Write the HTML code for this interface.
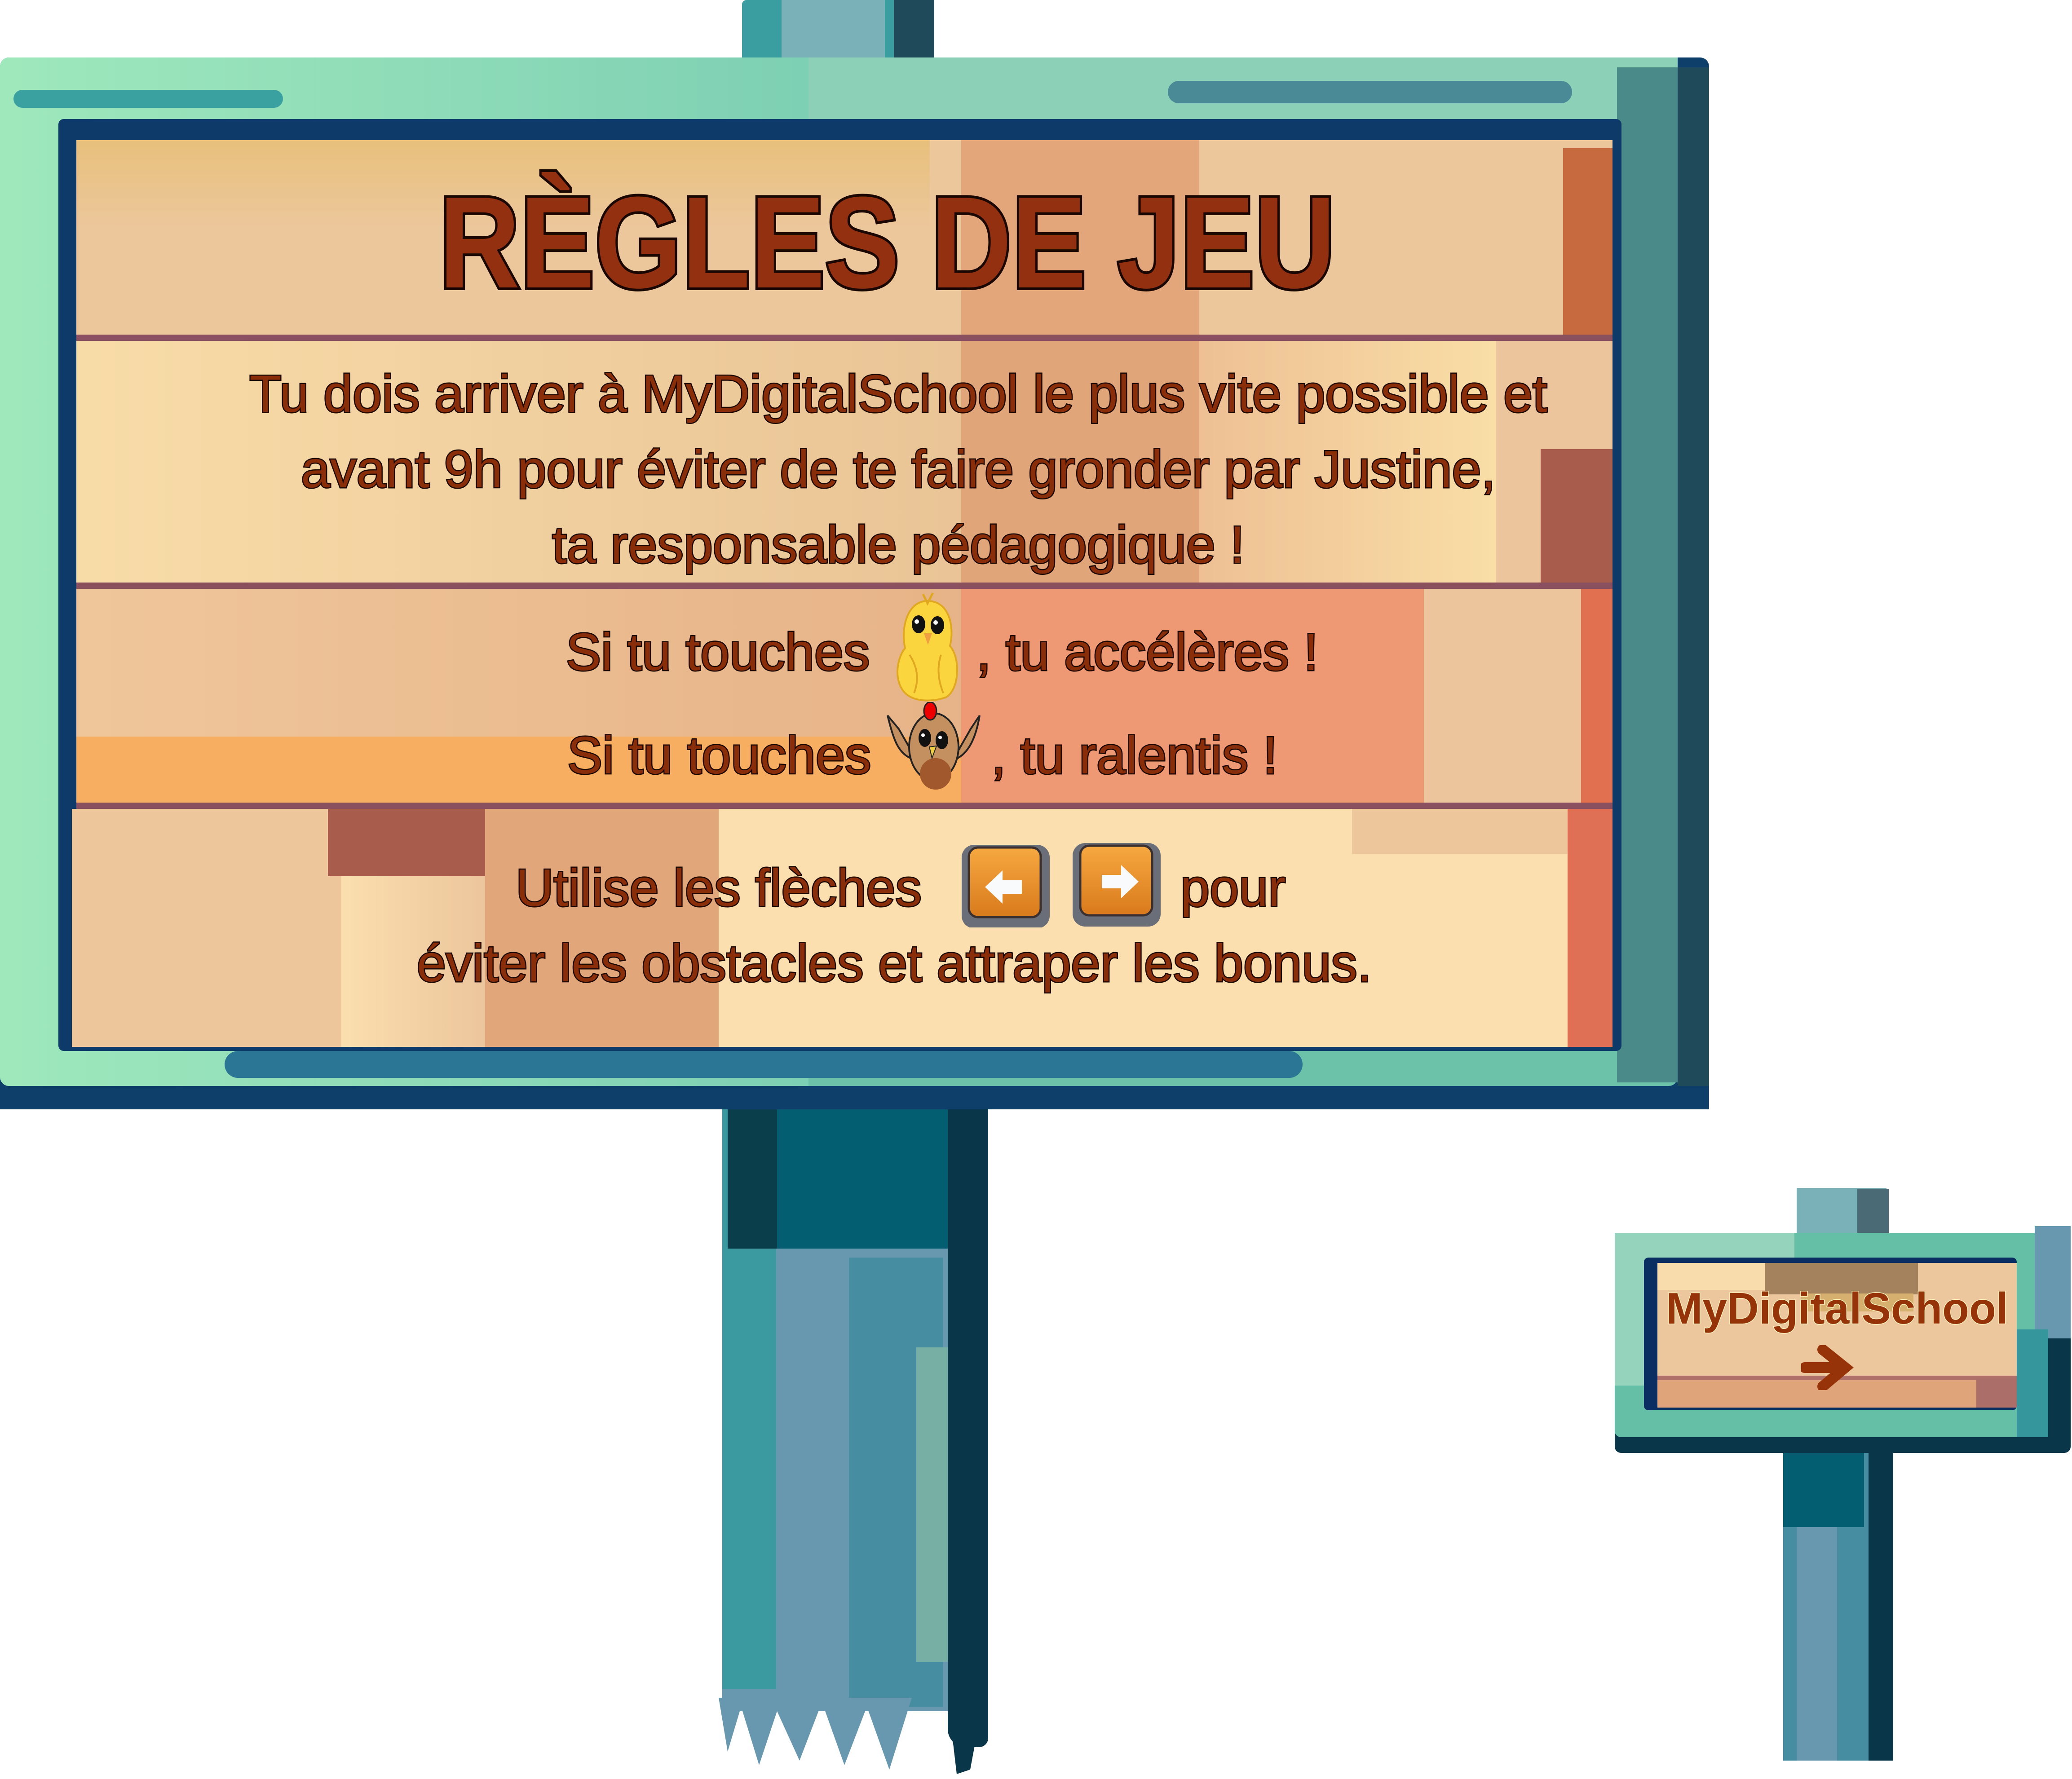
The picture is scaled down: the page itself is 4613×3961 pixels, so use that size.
<!DOCTYPE html>
<html><head><meta charset="utf-8">
<style>
html,body{margin:0;padding:0;background:#fff;}
body{width:4613px;height:3961px;position:relative;overflow:hidden;font-family:"Liberation Sans",sans-serif;}
.a{position:absolute;}
.t{position:absolute;white-space:nowrap;color:#8a2e0a;font-size:117px;line-height:117px;-webkit-text-stroke:5px #1a0800;paint-order:stroke fill;}
.c{text-align:center;}
</style></head><body>

<!-- main top post -->
<div class="a" style="left:1652px;top:0;width:428px;height:170px;background:#3a9ea0;border-radius:10px 10px 0 0"></div>
<div class="a" style="left:1740px;top:0;width:230px;height:160px;background:#7ab0b8"></div>
<div class="a" style="left:1990px;top:0;width:90px;height:170px;background:#1e4a5a"></div>

<!-- main bottom post -->
<div class="a" style="left:1608px;top:2460px;width:590px;height:1350px;background:#6898b0"></div>
<div class="a" style="left:1608px;top:2460px;width:120px;height:1300px;background:#3a9aa0"></div>
<div class="a" style="left:1620px;top:2460px;width:500px;height:320px;background:#025e70"></div>
<div class="a" style="left:1620px;top:2460px;width:110px;height:320px;background:#0a3e4a"></div>
<div class="a" style="left:1890px;top:2800px;width:210px;height:1000px;background:#468da2"></div>
<div class="a" style="left:2110px;top:2460px;width:90px;height:1430px;background:#0a364a;border-radius:0 0 20px 40px"></div>
<div class="a" style="left:2040px;top:3000px;width:70px;height:700px;background:#78afa4"></div>
<svg class="a" style="left:1600px;top:3780px" width="610" height="180"><path d="M0 0 L20 120 L50 20 L90 150 L130 30 L180 140 L230 10 L280 150 L330 20 L380 160 L430 0 Z" fill="#6898b0"/><path d="M510 0 L590 0 L560 160 L530 170 Z" fill="#0a364a"/></svg>

<!-- main frame -->
<div class="a" style="left:0;top:128px;width:3805px;height:2340px;background:#0e3e6a;border-radius:20px"></div>
<div class="a" style="left:0;top:128px;width:3735px;height:2290px;background:#6cc2a8;border-radius:20px"></div>
<div class="a" style="left:0;top:128px;width:1800px;height:2290px;background:linear-gradient(90deg,#9fe8bc,#7ed0b4);border-radius:20px 0 0 20px"></div>
<div class="a" style="left:1800px;top:128px;width:1935px;height:200px;background:#8cd0b8"></div>
<div class="a" style="left:3600px;top:150px;width:135px;height:2260px;background:#4a8a88"></div>
<div class="a" style="left:3735px;top:150px;width:70px;height:2320px;background:#1e4a5a"></div>
<div class="a" style="left:0;top:2418px;width:3805px;height:52px;background:#0e3e6a"></div>
<div class="a" style="left:500px;top:2340px;width:2400px;height:60px;background:#2a7694;border-radius:40px"></div>
<div class="a" style="left:30px;top:200px;width:600px;height:40px;background:#3aa0a0;border-radius:20px"></div>
<div class="a" style="left:2600px;top:180px;width:900px;height:50px;background:#4a8a96;border-radius:25px"></div>

<!-- inner border -->
<div class="a" style="left:130px;top:265px;width:3480px;height:2075px;background:#0e3a6a;border-radius:12px"></div>

<!-- planks -->
<div class="a" style="left:170px;top:312px;width:3420px;height:440px;background:#ecc79c"></div>
<div class="a" style="left:170px;top:312px;width:1900px;height:200px;background:linear-gradient(180deg,#e8c07c,#ecc79c)"></div>
<div class="a" style="left:2140px;top:312px;width:530px;height:440px;background:#e2a67a"></div>
<div class="a" style="left:3480px;top:330px;width:110px;height:420px;background:#c86a40"></div>
<div class="a" style="left:170px;top:745px;width:3420px;height:14px;background:#8a5060"></div>

<div class="a" style="left:170px;top:759px;width:3420px;height:545px;background:linear-gradient(90deg,#f8dca8,#e9c395 60%,#e9c395)"></div>
<div class="a" style="left:2140px;top:759px;width:530px;height:545px;background:#e0a67a"></div>
<div class="a" style="left:2670px;top:759px;width:660px;height:545px;background:linear-gradient(90deg,#eec094,#f9dea6)"></div>
<div class="a" style="left:3330px;top:759px;width:260px;height:545px;background:#ecc59c"></div>
<div class="a" style="left:3430px;top:1000px;width:160px;height:304px;background:#a85c4c"></div>
<div class="a" style="left:170px;top:1297px;width:3420px;height:14px;background:#8a5060"></div>

<div class="a" style="left:170px;top:1311px;width:3420px;height:483px;background:linear-gradient(90deg,#efc69a,#e0a67a)"></div>
<div class="a" style="left:170px;top:1640px;width:2000px;height:154px;background:#f8ae60"></div>
<div class="a" style="left:2140px;top:1311px;width:1030px;height:483px;background:#ee9874"></div>
<div class="a" style="left:3170px;top:1311px;width:370px;height:483px;background:#ecc59c"></div>
<div class="a" style="left:3520px;top:1311px;width:70px;height:483px;background:#e07050"></div>
<div class="a" style="left:170px;top:1787px;width:3420px;height:14px;background:#8a5060"></div>

<div class="a" style="left:160px;top:1801px;width:3430px;height:530px;background:#fbdfae"></div>
<div class="a" style="left:160px;top:1801px;width:600px;height:530px;background:#edc69c"></div>
<div class="a" style="left:760px;top:1801px;width:320px;height:530px;background:linear-gradient(90deg,#fbdfae,#ecc59c)"></div>
<div class="a" style="left:1080px;top:1801px;width:520px;height:530px;background:#e1a67a"></div>
<div class="a" style="left:730px;top:1801px;width:350px;height:150px;background:#a85c4c"></div>
<div class="a" style="left:3490px;top:1801px;width:100px;height:530px;background:#e07055"></div>
<div class="a" style="left:3010px;top:1801px;width:480px;height:100px;background:#edc69c"></div>

<!-- title -->
<div class="a" style="left:0;top:395px;width:3950px;text-align:center;font-weight:bold;font-size:290px;line-height:290px;color:#923010;-webkit-text-stroke:12px #1a0800;paint-order:stroke fill;white-space:nowrap"><span style="display:inline-block;transform:scaleX(0.86)">RÈGLES DE JEU</span></div>

<!-- body -->
<div class="t c" style="left:0;top:818px;width:4000px">Tu dois arriver à MyDigitalSchool le plus vite possible et</div>
<div class="t c" style="left:0;top:986px;width:4000px">avant 9h pour éviter de te faire gronder par Justine,</div>
<div class="t c" style="left:0;top:1154px;width:4000px">ta responsable pédagogique !</div>

<div class="t" style="left:1260px;top:1393px">Si tu touches</div>
<div class="t" style="left:2174px;top:1393px">, tu accélères !</div>
<div class="t" style="left:1263px;top:1623px">Si tu touches</div>
<div class="t" style="left:2207px;top:1623px">, tu ralentis !</div>
<div class="t" style="left:1148px;top:1918px">Utilise les flèches</div>
<div class="t" style="left:2628px;top:1918px">pour</div>
<div class="t c" style="left:0;top:2086px;width:3982px">éviter les obstacles et attraper les bonus.</div>

<!-- chick -->
<svg class="a" style="left:1965px;top:1318px" width="200" height="250" viewBox="0 0 200 250">
<path d="M100 20 C150 20 160 80 150 120 C175 150 170 220 140 235 C110 245 70 245 50 225 C25 200 30 150 50 125 C40 80 55 20 100 20 Z" fill="#fbd53e" stroke="#e0a820" stroke-width="4"/>
<ellipse cx="80" cy="72" rx="15" ry="20" fill="#111"/><ellipse cx="122" cy="74" rx="15" ry="20" fill="#111"/>
<circle cx="76" cy="66" r="5" fill="#fff"/><circle cx="118" cy="68" r="5" fill="#fff"/>
<path d="M92 92 L110 92 L101 118 Z" fill="#f0a040"/>
<path d="M90 5 L100 25 L112 2" stroke="#e0a820" stroke-width="5" fill="none"/>
<path d="M60 140 C80 170 80 200 70 225 M130 140 C120 170 125 200 135 225" stroke="#e0a820" stroke-width="4" fill="none"/>
</svg>
<!-- hen -->
<svg class="a" style="left:1971px;top:1563px" width="220" height="215" viewBox="0 0 220 215">
<path d="M5 30 C20 90 30 120 70 130 L30 60 Z" fill="#c49060" stroke="#222" stroke-width="4"/>
<path d="M210 30 C200 90 180 120 150 130 L190 60 Z" fill="#c49060" stroke="#222" stroke-width="4"/>
<ellipse cx="108" cy="100" rx="55" ry="75" fill="#c49060" stroke="#222" stroke-width="4"/>
<ellipse cx="112" cy="160" rx="35" ry="35" fill="#a0582c"/>
<ellipse cx="100" cy="20" rx="14" ry="20" fill="#e00" stroke="#222" stroke-width="3"/>
<ellipse cx="88" cy="80" rx="14" ry="20" fill="#111"/><ellipse cx="126" cy="85" rx="14" ry="20" fill="#111"/>
<circle cx="84" cy="74" r="4" fill="#fff"/><circle cx="122" cy="79" r="4" fill="#fff"/>
<path d="M98 100 L114 98 L104 125 Z" fill="#f0d040" stroke="#222" stroke-width="2"/>
</svg>

<!-- arrow keys -->
<svg class="a" style="left:2135px;top:1865px" width="460" height="200" viewBox="0 0 460 200">
<defs><linearGradient id="k" x1="0" y1="0" x2="0" y2="1"><stop offset="0" stop-color="#f6a840"/><stop offset="1" stop-color="#d97a1c"/></linearGradient></defs>
<rect x="6" y="16" width="196" height="186" rx="28" fill="#6a6e78"/>
<rect x="22" y="22" width="160" height="155" rx="20" fill="url(#k)" stroke="#3a3030" stroke-width="5"/>
<path d="M58 110 L97 73 L97 95 L140 95 L140 125 L97 125 L97 147 Z" fill="#f8fafc"/>
<rect x="253" y="12" width="196" height="186" rx="28" fill="#6a6e78"/>
<rect x="270" y="18" width="160" height="155" rx="20" fill="url(#k)" stroke="#3a3030" stroke-width="5"/>
<path d="M400 98 L361 61 L361 83 L318 83 L318 113 L361 113 L361 135 Z" fill="#f8fafc"/>
</svg>

<!-- small sign post -->
<div class="a" style="left:4000px;top:2645px;width:200px;height:100px;background:#7ab0b8"></div>
<div class="a" style="left:4135px;top:2648px;width:70px;height:100px;background:#4a6a76"></div>
<div class="a" style="left:3970px;top:3200px;width:240px;height:720px;background:#468da2"></div>
<div class="a" style="left:3970px;top:3200px;width:180px;height:200px;background:#025e70"></div>
<div class="a" style="left:4160px;top:3200px;width:55px;height:720px;background:#0a364a"></div>
<div class="a" style="left:4000px;top:3400px;width:90px;height:520px;background:#6898b0"></div>

<!-- small sign frame -->
<div class="a" style="left:3595px;top:2745px;width:1015px;height:490px;background:#0a364a;border-radius:14px"></div>
<div class="a" style="left:3595px;top:2745px;width:960px;height:455px;background:#65bfa7;border-radius:14px 0 0 14px"></div>
<div class="a" style="left:3595px;top:2745px;width:400px;height:340px;background:#95d3bd"></div>
<div class="a" style="left:4530px;top:2730px;width:80px;height:250px;background:#6898b0"></div>
<div class="a" style="left:4490px;top:2960px;width:70px;height:240px;background:#35979c"></div>
<div class="a" style="left:3660px;top:2800px;width:830px;height:340px;background:#0a2e62;border-radius:10px"></div>
<div class="a" style="left:3690px;top:2812px;width:800px;height:322px;background:#ecc69d"></div>
<div class="a" style="left:3690px;top:2812px;width:250px;height:60px;background:#f8dcac"></div>
<div class="a" style="left:3930px;top:2812px;width:340px;height:70px;background:#a4825e"></div>
<div class="a" style="left:4010px;top:2880px;width:250px;height:40px;background:#d5b06e"></div>
<div class="a" style="left:3690px;top:3070px;width:800px;height:64px;background:#e0a47a"></div>
<div class="a" style="left:3690px;top:3063px;width:800px;height:10px;background:#ae7068"></div>
<div class="a" style="left:4400px;top:3070px;width:90px;height:64px;background:#ac6e68"></div>
<div class="a" style="left:3690px;top:2858px;width:800px;text-align:center;font-weight:bold;font-size:98px;line-height:110px;color:#963308;-webkit-text-stroke:3px #fff3c0;paint-order:stroke fill;white-space:nowrap">MyDigitalSchool</div>
<svg class="a" style="left:4010px;top:2995px" width="120" height="100" viewBox="0 0 120 100"><path d="M8 50 L70 50 M48 10 L98 50 L48 92" stroke="#963308" stroke-width="24" fill="none" stroke-linejoin="miter" stroke-linecap="round"/></svg>

</body></html>
